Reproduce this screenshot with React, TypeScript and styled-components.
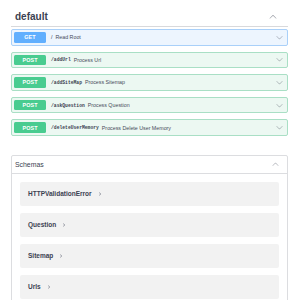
import React from "react";
import styled, { createGlobalStyle } from "styled-components";

const Global = createGlobalStyle`
  html, body { margin: 0; padding: 0; background: #ffffff; }
  body { font-family: "Liberation Sans", Arial, sans-serif; color: #3b4151; }
`;

const Page = styled.div`
  width: 300px;
  height: 300px;
  overflow: hidden;
  box-sizing: border-box;
  padding: 7px 12px 0 11px;
`;

const TagHeader = styled.div`
  display: flex;
  align-items: center;
  justify-content: space-between;
  height: 20px;
  box-sizing: border-box;
  padding: 0 11px 0 4px;
  border-bottom: 1px solid #d8d9dc;
  margin-bottom: 1px;
`;

const TagTitle = styled.span`
  font-size: 10px;
  font-weight: 700;
  line-height: 12px;
  color: #3b4151;
`;

const Ops = styled.div`
  display: flex;
  flex-direction: column;
  gap: 6px;
  padding-top: 1px;
`;

const methodColor = { get: "#61affe", post: "#49cc90" } as const;
const methodBg = { get: "#edf5fe", post: "#ecf8f2" } as const;
const methodBorder = { get: "#a9d0f9", post: "#a9dfc5" } as const;

type Method = keyof typeof methodColor;

const OpRow = styled.div<{ $m: Method }>`
  display: flex;
  align-items: center;
  height: 16.6px;
  box-sizing: border-box;
  padding: 0 4px 0 2px;
  border: 1px solid ${(p) => methodBorder[p.$m]};
  border-radius: 2px;
  background: ${(p) => methodBg[p.$m]};
`;

const Badge = styled.span<{ $m: Method }>`
  width: 32px;
  height: 10.6px;
  flex: none;
  display: flex;
  align-items: center;
  justify-content: center;
  border-radius: 1.5px;
  background: ${(p) => methodColor[p.$m]};
  color: #fff;
  font-size: 5.4px;
  font-weight: 700;
  letter-spacing: 0.1px;
`;

const Path = styled.span<{ $plain?: boolean }>`
  margin-left: 5px;
  font-family: ${(p) =>
    p.$plain ? `"Liberation Sans", Arial, sans-serif` : `"Liberation Mono", "DejaVu Sans Mono", monospace`};
  font-size: ${(p) => (p.$plain ? "5.3px" : "4.7px")};
  font-weight: ${(p) => (p.$plain ? 400 : 700)};
  color: #3b4151;
`;

const Summary = styled.span`
  margin-left: 3px;
  font-size: 5.3px;
  color: #474c5a;
  flex: 1;
`;

const Models = styled.section`
  margin-top: 19px;
  border: 1px solid #dcdde0;
  border-radius: 2px;
  padding-bottom: 6px;
`;

const ModelsHeader = styled.div`
  display: flex;
  align-items: center;
  justify-content: space-between;
  height: 17px;
  padding: 0 8px 0 3px;
  border-bottom: 1px solid #dcdde0;
`;

const ModelsTitle = styled.span`
  font-size: 6.9px;
  color: #3b4151;
`;

const ModelList = styled.div`
  display: flex;
  flex-direction: column;
  gap: 7px;
  padding: 8px 8px 0 8px;
`;

const ModelItem = styled.div`
  display: flex;
  align-items: center;
  gap: 6px;
  height: 24px;
  padding-left: 8px;
  border-radius: 2px;
  background: #f2f2f2;
`;

const ModelName = styled.span`
  font-size: 6.5px;
  font-weight: 700;
  color: #3b4151;
`;

const ArrowSvg = styled.svg<{ $up?: boolean }>`
  flex: none;
  fill: #3b4151;
  opacity: 0.55;
  transform: ${(p) => (p.$up ? "rotate(180deg)" : "none")};
`;

const Arrow = ({ up, size = 8 }: { up?: boolean; size?: number }) => (
  <ArrowSvg $up={up} width={size} height={size} viewBox="0 0 20 20">
    <path d="M17.418 6.109c.272-.268.709-.268.979 0s.271.701 0 .969l-7.908 7.83c-.27.268-.707.268-.979 0l-7.908-7.83c-.27-.268-.27-.701 0-.969.271-.268.709-.268.979 0L10 13.25l7.418-7.141z" />
  </ArrowSvg>
);

const SmallRightSvg = styled.svg`
  flex: none;
`;

const SmallRight = () => (
  <SmallRightSvg width="4" height="4" viewBox="0 0 4 4">
    <path d="M1.2 0.6 L2.8 2 L1.2 3.4" fill="none" stroke="#5b6070" strokeWidth="0.6" />
  </SmallRightSvg>
);

const ops: { m: Method; path: string; summary: string }[] = [
  { m: "get", path: "/", summary: "Read Root" },
  { m: "post", path: "/addUrl", summary: "Process Url" },
  { m: "post", path: "/addSiteMap", summary: "Process Sitemap" },
  { m: "post", path: "/askQuestion", summary: "Process Question" },
  { m: "post", path: "/deleteUserMemory", summary: "Process Delete User Memory" },
];

const models = ["HTTPValidationError", "Question", "Sitemap", "Urls"];

export default function App() {
  return (
    <>
      <Global />
      <Page>
        <TagHeader>
          <TagTitle>default</TagTitle>
          <Arrow up />
        </TagHeader>
        <Ops>
          {ops.map((o) => (
            <OpRow key={o.path} $m={o.m}>
              <Badge $m={o.m}>{o.m.toUpperCase()}</Badge>
              <Path $plain={o.m === "get"}>{o.path}</Path>
              <Summary>{o.summary}</Summary>
              <Arrow size={7} />
            </OpRow>
          ))}
        </Ops>
        <Models>
          <ModelsHeader>
            <ModelsTitle>Schemas</ModelsTitle>
            <Arrow up size={7} />
          </ModelsHeader>
          <ModelList>
            {models.map((n) => (
              <ModelItem key={n}>
                <ModelName>{n}</ModelName>
                <SmallRight />
              </ModelItem>
            ))}
          </ModelList>
        </Models>
      </Page>
    </>
  );
}
